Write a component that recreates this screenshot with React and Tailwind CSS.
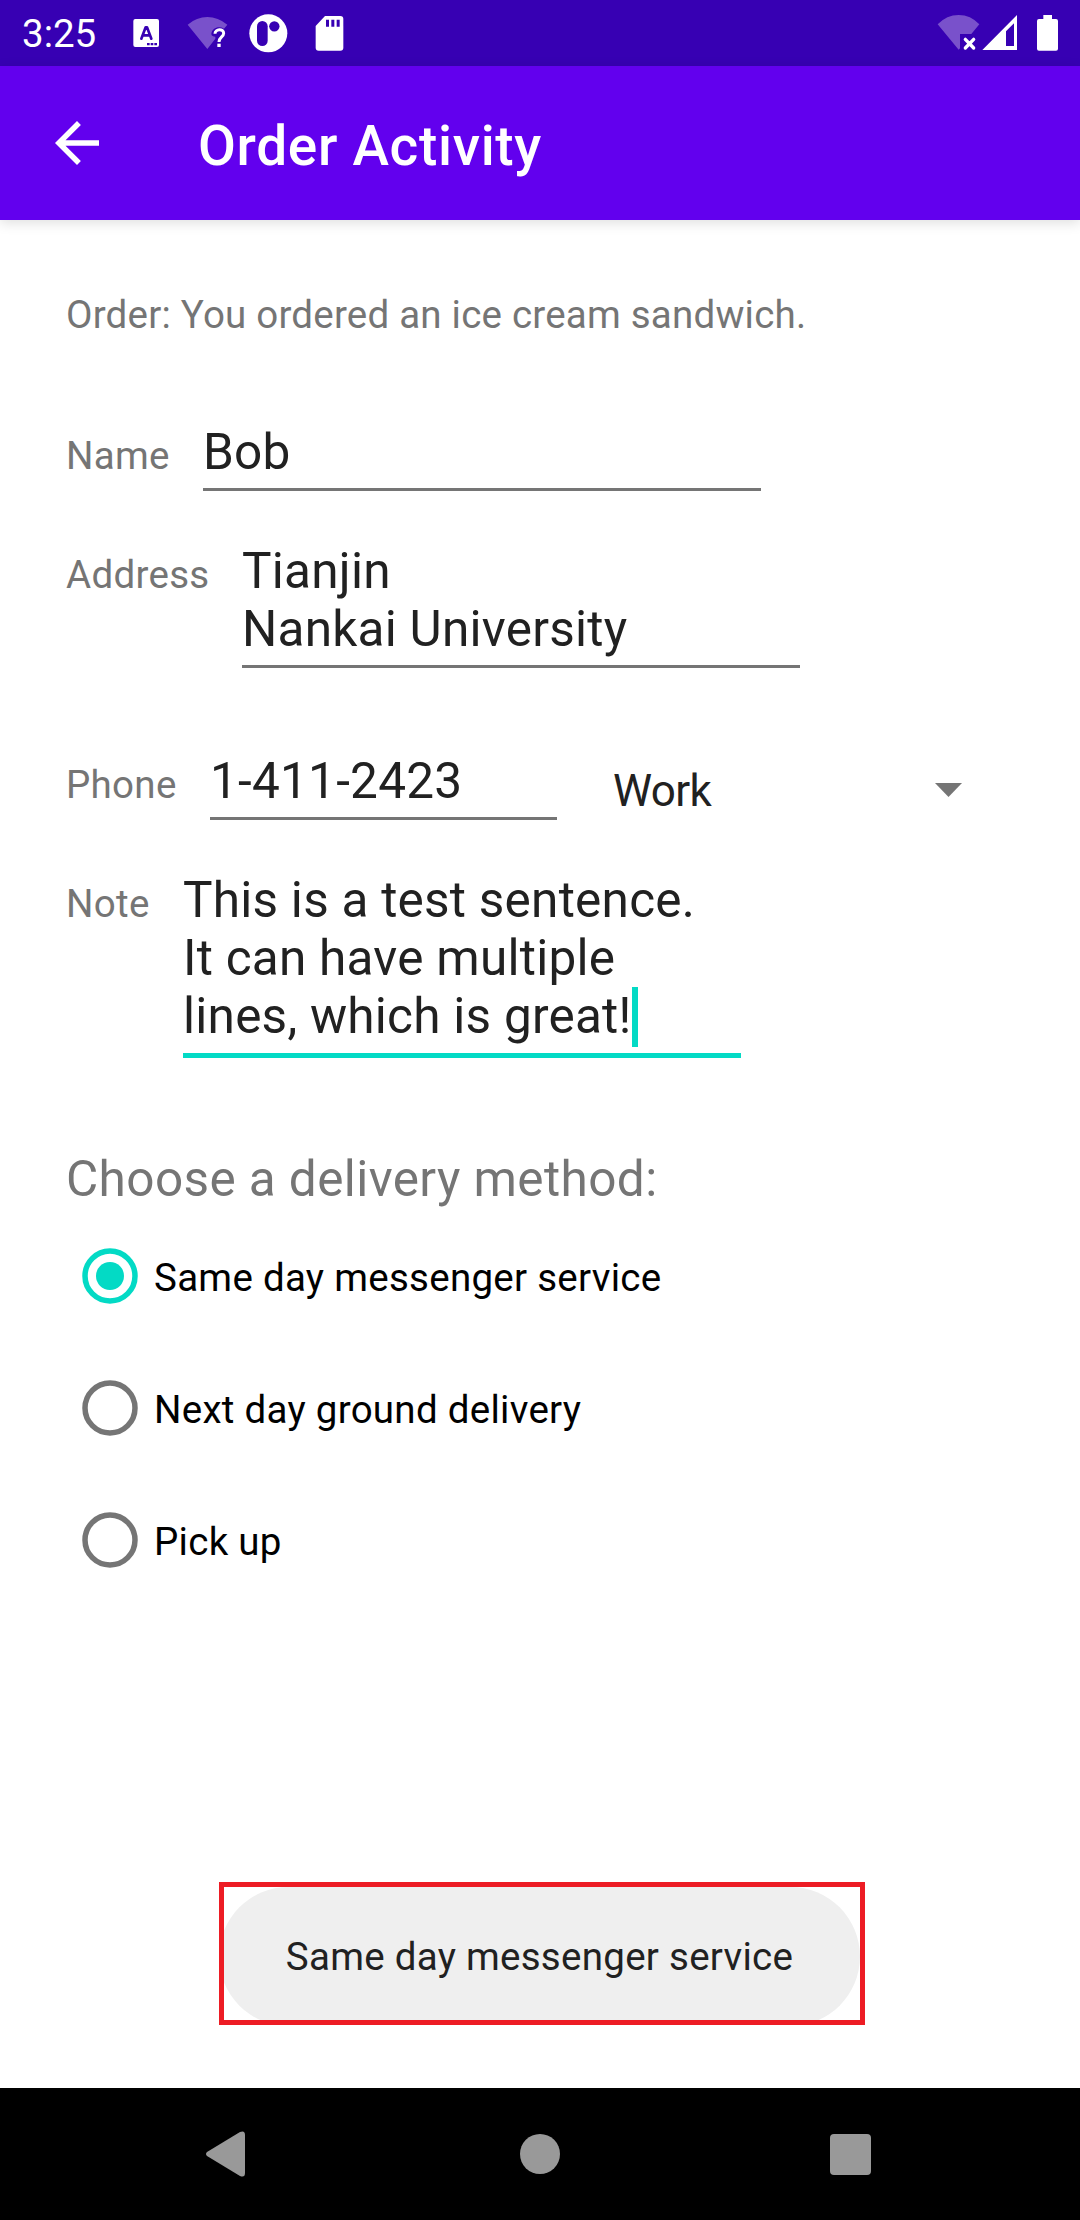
import React from 'react'

function StatusBar() {
  return (
    <header className="flex h-[66px] items-center justify-between bg-[#3700b3] text-white">
      <div className="flex h-full items-center">
        <span className="w-[111px] pt-[2px] pl-[22px] text-[38.5px] leading-[46px]">3:25</span>
        <svg className="h-[66px] w-[249px]" viewBox="333 0 747 198" fill="#fff">
          <rect x="400" y="57" width="77" height="84" rx="6" />
          <path d="M424 116 437 82h4l13 34M429 106h20" fill="none" stroke="#3700b3" strokeWidth="8" strokeLinecap="round" strokeLinejoin="round" />
          <path d="M441 129h8v7h-8zM452 129h8v7h-8zM463 129h8v7h-8z" fill="#3700b3" />
          <path d="M563 74Q590 51 622 51T682 74L672 86C656 77 636 84 634 102C634 108 640 110 646 110V116L622 147Z" fill="#7951cb" />
          <path d="M645 101C645 86 671 85 671 100C671 111 657 111 657 126" fill="none" stroke="#fff" strokeWidth="9" />
          <rect x="652" y="131" width="10" height="10" />
          <circle cx="805" cy="100" r="57" />
          <rect x="771" y="63" width="32" height="75" rx="16" fill="#3700b3" />
          <circle cx="823" cy="79" r="15.5" fill="#3700b3" />
          <path d="M975 48h46q9 0 9 9v86q0 9-9 9h-65q-9 0-9-9V78z" />
          <path d="M978 59h9v21h-9zM994 59h9v21h-9zM1010 59h9v21h-9z" fill="#3700b3" />
        </svg>
      </div>
      <svg className="h-[66px] w-[180px]" viewBox="0 0 540 198" fill="#fff">
        <path d="M113 73Q140 45 176 45T238 73L214 102H180V145L176 149Z" fill="#7951cb" />
        <path d="M196 118 221 144M221 118 196 144" stroke="#fff" strokeWidth="10" strokeLinecap="round" />
        <path fillRule="evenodd" d="M247 150 351 45V150ZM318 94V138H342V70Z" />
        <path d="M430 45h26v12h12q6 0 6 6v83q0 6-6 6h-51q-6 0-6-6V63q0-6 6-6h13z" />
      </svg>
    </header>
  )
}

function AppBar() {
  return (
    <div className="flex h-[154px] items-center bg-[#6200ee] pl-[44px] text-white shadow-[0_3px_12px_rgba(0,0,0,0.13)]">
      <svg className="size-[66px]" viewBox="0 0 24 24" fill="currentColor">
        <path d="M20 11H7.83l5.59-5.59L12 4l-8 8 8 8 1.41-1.41L7.83 13H20v-2z" />
      </svg>
      <h1 className="ml-[88px] pt-[6px] text-[55px] leading-[64px] font-medium tracking-[0.68px]">Order Activity</h1>
    </div>
  )
}

function Label({ children }) {
  return <label className="text-[38.5px] leading-[46px] tracking-[0.3px] whitespace-pre text-[#757575]">{children}</label>
}

const fieldText = 'text-[49.5px] leading-[58px] tracking-[0.24px] text-[#212121]'

function Radio({ label, checked }) {
  return (
    <div className="flex h-[132px] items-center pl-[14px]">
      <svg className={checked ? 'size-[60px] text-[#03dac5]' : 'size-[60px] text-[#757575]'} viewBox="0 0 60 60">
        <circle cx="30" cy="30" r="25" fill="none" stroke="currentColor" strokeWidth="5.5" />
        {checked && <circle cx="30" cy="30" r="14" fill="currentColor" />}
      </svg>
      <span className="ml-[14px] pt-[4px] text-[38.5px] leading-[46px] tracking-[0.28px] text-black">{label}</span>
    </div>
  )
}

function NavBar() {
  return (
    <footer className="flex h-[132px] items-center bg-black pl-[206px]">
      <svg className="h-[46px] w-[40px]" viewBox="0 0 40 46" fill="#999">
        <path d="M1 21 34 1Q39-1 39 4V42Q39 47 34 45L1 25Q-1 23 1 21Z" />
      </svg>
      <div className="ml-[274px] size-[40px] rounded-full bg-[#999]" />
      <div className="ml-[270px] size-[41px] rounded-[4px] bg-[#999]" />
    </footer>
  )
}

export default function App() {
  return (
    <div className="flex h-[2220px] w-[1080px] flex-col overflow-hidden bg-white font-[Roboto,sans-serif]">
      <StatusBar />
      <AppBar />
      <main className="flex grow flex-col px-[66px] pt-[69px]">
        <p className="h-[52px] text-[38.5px] leading-[52px] tracking-[0.22px] text-[#757575]">
          Order: You ordered an ice cream sandwich.
        </p>

        <div className="mt-[82px] flex h-[68px] items-baseline">
          <div className="w-[137px]"><Label>Name</Label></div>
          <div className={`w-[558px] border-b-[3px] border-[#757575] pb-[7px] ${fieldText}`}>Bob</div>
        </div>

        <div className="mt-[51px] flex h-[126px] items-baseline">
          <div className="w-[176px]"><Label>Address</Label></div>
          <div className={`w-[558px] border-b-[3px] border-[#757575] pb-[7px] ${fieldText}`}>
            <p>Tianjin</p>
            <p>Nankai University</p>
          </div>
        </div>

        <div className="mt-[84px] flex h-[68px] items-start">
          <div className="flex items-baseline">
            <div className="w-[144px]"><Label>Phone</Label></div>
            <div className={`w-[347px] border-b-[3px] border-[#757575] pb-[7px] ${fieldText}`}>1-411-2423</div>
          </div>
          <div className="ml-[56px] flex w-[349px] items-start justify-between">
            <span className="pt-[13px] text-[44px] leading-[52px] tracking-[-0.6px] text-[#212121]">Work</span>
            <svg className="mt-[31px] h-[14px] w-[27px]" viewBox="0 0 27 14" fill="#757575">
              <path d="M0 0h27L13.5 14z" />
            </svg>
          </div>
        </div>

        <div className="mt-[51px] flex h-[187px] items-baseline">
          <div className="w-[117px]"><Label>Note</Label></div>
          <div className={`w-[558px] border-b-[5px] border-[#03dac5] pb-[8px] ${fieldText}`}>
            <p>This is a test sentence.</p>
            <p>It can have multiple</p>
            <p className="flex h-[58px]">
              lines, which is great!
              <span className="h-[60px] w-[6px] bg-[#03dac5]" />
            </p>
          </div>
        </div>

        <h2 className="mt-[92px] h-[58px] text-[49.5px] leading-[58px] tracking-[0.4px] text-[#757575]">
          Choose a delivery method:
        </h2>
        <div className="mt-[2px] flex flex-col">
          <Radio label="Same day messenger service" checked />
          <Radio label="Next day ground delivery" />
          <Radio label="Pick up" />
        </div>

        <div className="mt-[276px] ml-[153px] h-[143px] w-[646px] overflow-hidden border-[5px] border-[#ed1c24]">
          <div className="-ml-[5px] flex h-[139px] items-center justify-center rounded-full bg-[#efefef]">
            <span className="text-[38.5px] leading-[46px] tracking-[0.28px] text-[#212121]">Same day messenger service</span>
          </div>
        </div>
      </main>
      <NavBar />
    </div>
  )
}
